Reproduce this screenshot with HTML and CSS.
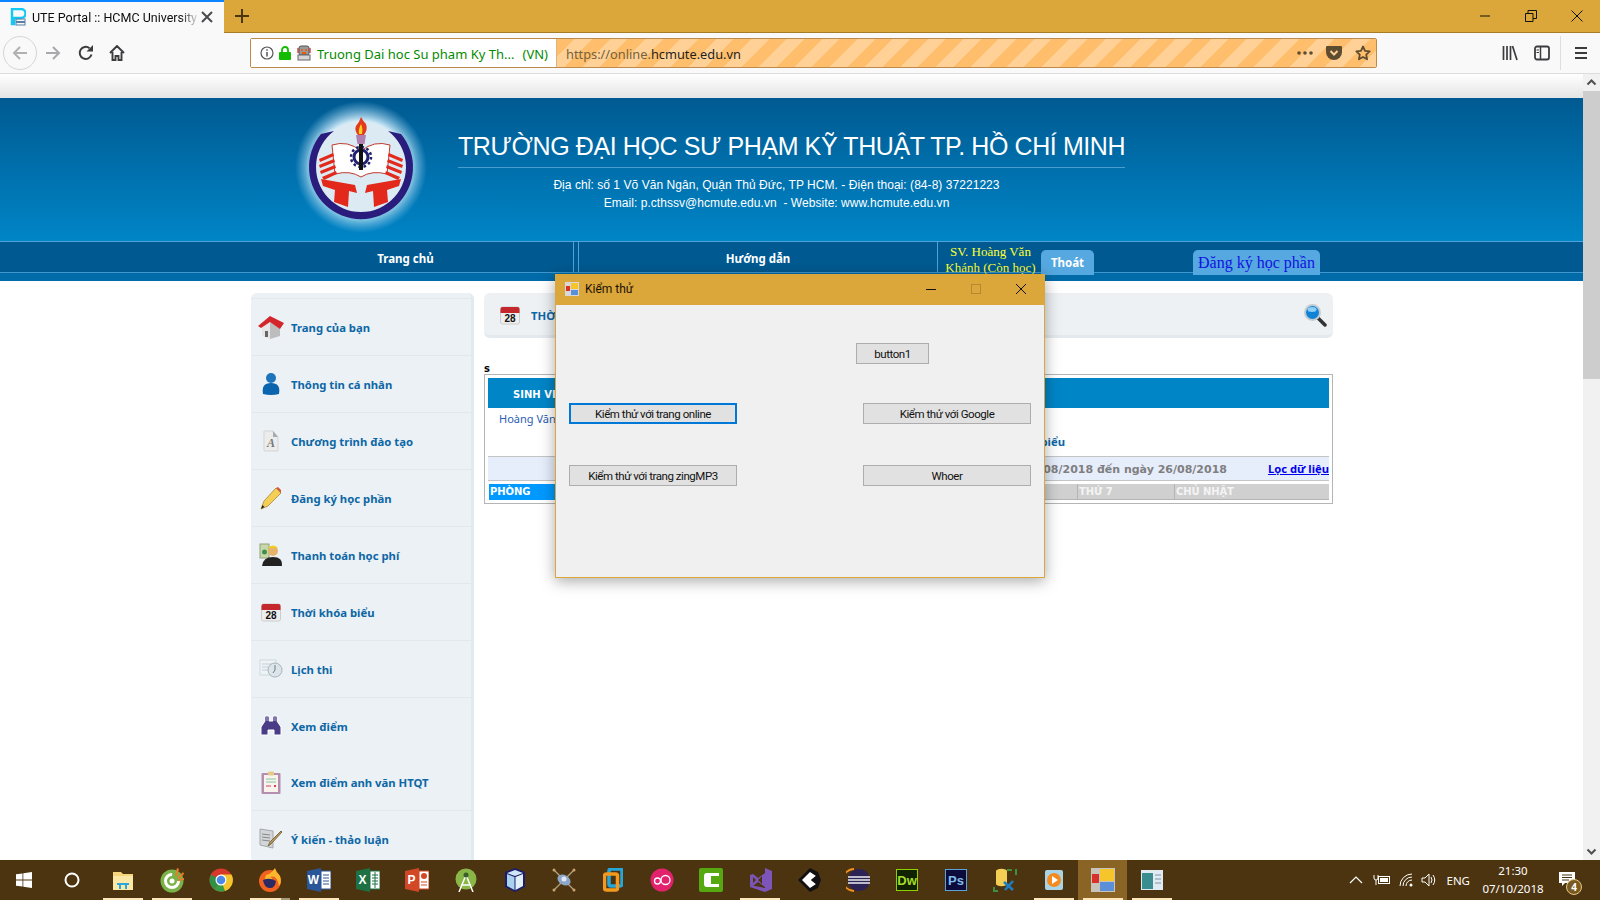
FILE: index.html
```html
<!DOCTYPE html>
<html lang="vi">
<head>
  <meta charset="UTF-8">
  <title>UTE Portal :: HCMC University of Technology</title>
  <link rel="stylesheet" href="styles.css">
</head>
<body>
  <!-- Browser title bar -->
  <div class="titlebar">
    <div class="tab">
      <svg class="favicon" width="16" height="18" viewBox="0 0 16 18"><path d="M2 1h9a4 4 0 0 1 0 9H4v6H2z" fill="none" stroke="#12c8f5" stroke-width="2.400"/><rect x="6" y="11" width="9" height="2.500" fill="none" stroke="#5b7fa5"/><rect x="6" y="14.500" width="9" height="2.500" fill="none" stroke="#5b7fa5"/></svg>
      <span class="tab-title">UTE Portal :: HCMC University of</span>
      <svg class="tab-close" width="12" height="12" viewBox="0 0 12 12"><path d="M1 1l10 10M11 1L1 11" stroke="#4a4a4f" stroke-width="2"/></svg>
    </div>
    <svg class="new-tab" width="16" height="16" viewBox="0 0 16 16"><path d="M8 1v14M1 8h14" stroke="#4b3612" stroke-width="2"/></svg>
    <div class="win-controls">
      <svg width="12" height="12" viewBox="0 0 12 12"><path d="M1 6h10" stroke="#111"/></svg>
      <svg width="12" height="12" viewBox="0 0 12 12"><path d="M.5 3.500h7.500v8h-7.500zM3 3.500V.5h8.500v8H8" fill="none" stroke="#111"/></svg>
      <svg width="12" height="12" viewBox="0 0 12 12"><path d="M.5.5l11 11M11.500.5l-11 11" stroke="#111"/></svg>
    </div>
  </div>

  <!-- Browser toolbar -->
  <div class="toolbar">
    <div class="back-btn">
      <svg width="18" height="18" viewBox="0 0 18 18"><path d="M16 9H3M9 3L3 9l6 6" fill="none" stroke="#b1b1b3" stroke-width="2"/></svg>
    </div>
    <svg class="forward-btn" width="18" height="18" viewBox="0 0 18 18"><path d="M2 9h13M9 3l6 6-6 6" fill="none" stroke="#a9a9ab" stroke-width="2"/></svg>
    <svg class="reload-btn" width="16" height="16" viewBox="0 0 16 16"><path d="M13.500 9.500A6 6 0 1 1 11.500 3.200" fill="none" stroke="#3c3c3f" stroke-width="2"/><path d="M15 0v6.500H8.500z" fill="#3c3c3f"/></svg>
    <svg class="home-btn" width="16" height="16" viewBox="0 0 16 16"><path d="M1 8l7-7 7 7M3.500 7v8h3v-4h3v4h3V7" fill="none" stroke="#3c3c3f" stroke-width="1.900"/></svg>

    <div class="urlbar">
      <div class="identity">
        <svg width="14" height="14" viewBox="0 0 14 14"><circle cx="7" cy="7" r="6" fill="none" stroke="#55555a" stroke-width="1.200"/><path d="M7 6v4.500M7 3.200v1.500" stroke="#55555a" stroke-width="1.500"/></svg>
        <svg width="12" height="14" viewBox="0 0 12 14"><path d="M3 6V4a3 3 0 0 1 6 0v2" fill="none" stroke="#12bc00" stroke-width="1.800"/><rect y="6" width="12" height="8" rx="1" fill="#12bc00"/></svg>
        <svg width="16" height="16" viewBox="0 0 16 16"><rect x="3" y="1" width="10" height="9" rx="2" fill="#9a9a9a" stroke="#555"/><circle cx="6" cy="5" r="1" fill="#e8590c"/><circle cx="10" cy="5" r="1" fill="#e8590c"/><rect x="6" y="7" width="4" height="2" fill="#e8590c"/><path d="M2 3v5M14 3v5" stroke="#c22" stroke-width="1.200"/><rect x="2" y="10" width="12" height="5" fill="#d5d5d5" stroke="#666"/></svg>
        <span class="identity-name">Truong Dai hoc Su pham Ky Th...</span>
        <span class="identity-name">(VN)</span>
      </div>
      <div class="urlfield">
        <span class="url-text">https://online.<b>hcmute.edu.vn</b></span>
        <svg width="16" height="4" viewBox="0 0 16 4"><circle cx="2" cy="2" r="1.800" fill="#5e4c30"/><circle cx="8" cy="2" r="1.800" fill="#5e4c30"/><circle cx="14" cy="2" r="1.800" fill="#5e4c30"/></svg>
        <svg width="16" height="16" viewBox="0 0 16 16"><path d="M1 1h14a1 1 0 0 1 1 1v5a8 8 0 0 1-16 0V2a1 1 0 0 1 1-1z" fill="#5e4c30"/><path d="M4.500 6L8 9.500 11.500 6" fill="none" stroke="#ffd196" stroke-width="2"/></svg>
        <svg width="16" height="16" viewBox="0 0 16 16"><path d="M8 1.500l2 4.300 4.700.6-3.500 3.200.9 4.700L8 12l-4.100 2.300.9-4.700L1.300 6.400 6 5.800z" fill="none" stroke="#5e4c30" stroke-width="1.800" stroke-linejoin="round"/></svg>
      </div>
    </div>

    <div class="tools">
      <svg width="16" height="16" viewBox="0 0 16 16"><path d="M1.500 1v14M5 1v14M8.500 1v14M10.500 1l4.500 14" fill="none" stroke="#3c3c3f" stroke-width="1.700"/></svg>
      <svg width="16" height="16" viewBox="0 0 16 16"><rect x="1" y="1.500" width="14" height="13" rx="2" fill="none" stroke="#3c3c3f" stroke-width="1.800"/><path d="M6.500 2v12" stroke="#3c3c3f" stroke-width="1.500"/><path d="M2.500 5h2.500M2.500 7.500h2.500" stroke="#3c3c3f"/></svg>
      <span class="tools-sep"></span>
      <svg width="14" height="14" viewBox="0 0 14 14"><path d="M1 2h12M1 7h12M1 12h12" stroke="#3c3c3f" stroke-width="1.800"/></svg>
    </div>
  </div>

  <div class="viewport">
    <div class="page">
      <div class="page-top"></div>

      <header class="site-header">
        <svg class="logo" width="128" height="128" viewBox="0 0 128 128">
          <defs>
            <radialGradient id="glow"><stop offset="0.7" stop-color="#cfe9f7"/><stop offset="1" stop-color="#8fcbec" stop-opacity="0"/></radialGradient>
          </defs>
          <circle cx="64" cy="60" r="66" fill="url(#glow)"/>
          <circle cx="64" cy="60" r="46" fill="#dbeaf3"/>
          <path d="M24 27A52 52 0 1 0 104 27L91 24A45 45 0 1 1 37 24Z" fill="#2a1c7c"/>
          <path d="M22 26A54 54 0 1 0 106 26" fill="none" stroke="#6cc0e0"/>
          <path d="M35 38q16-5 29 6 13-11 29-6l-3 29q-15-4-26 3-11-7-26-3z" fill="#fff" stroke="#c23a30"/>
          <circle cx="64" cy="50" r="7" fill="none" stroke="#20206e" stroke-width="3"/>
          <circle cx="64" cy="50" r="10" fill="none" stroke="#20206e" stroke-width="2.500" stroke-dasharray="2.600 2.640"/>
          <rect x="62" y="34" width="4" height="29" fill="#111"/>
          <path d="M60.500 37l-1.500-9h10l-1.500 9z" fill="#b07fb0"/>
          <path d="M64 10q2 4 5 7 2 6-2 11h-6q-4-5-2-9 3-3 5-9z" fill="#e23a1e"/>
          <path d="M64 17q2 4 1 10h-3q-1-4 2-10z" fill="#ffd21e"/>
          <path d="M22 52l14-6 1 3-14 6zM22 58l15-6 1 3-15 6zM23 64l15-6 1 3-15 6zM25 70l14-6 1 3-13 6z" fill="#e3291b"/>
          <path d="M106 52l-14-6-1 3 14 6zM106 58l-15-6-1 3 15 6zM105 64l-15-6-1 3 15 6zM103 70l-14-6-1 3 13 6z" fill="#e3291b"/>
          <path d="M24 72l34 6 2 8-8-2-1 16-14-5 1-12-12-4z" fill="#e3291b"/>
          <path d="M104 72l-34 6-2 8 8-2 1 16 14-5-1-12 12-4z" fill="#e3291b"/>
        </svg>
        <div class="school">
          <h1>TRƯỜNG ĐẠI HỌC SƯ PHẠM KỸ THUẬT TP. HỒ CHÍ MINH</h1>
          <p>Địa chỉ: số 1 Võ Văn Ngân, Quận Thủ Đức, TP HCM. - Điện thoại: (84-8) 37221223</p>
          <p>Email: p.cthssv@hcmute.edu.vn &nbsp;- Website: www.hcmute.edu.vn</p>
        </div>
      </header>

      <nav class="site-nav">
        <div class="nav-row">
          <a class="nav-link nav-home">Trang chủ</a>
          <a class="nav-link nav-guide">Hướng dẫn</a>
          <div class="nav-user">SV. Hoàng Văn<br>Khánh (Còn học)</div>
          <a class="nav-tab nav-logout">Thoát</a>
          <a class="nav-tab nav-register">Đăng ký học phần</a>
        </div>
      </nav>

      <div class="content">
        <aside class="sidebar">
          <a class="side-item">
            <svg width="26" height="24" viewBox="0 0 26 24"><path d="M4 12l8-5v17l-8-3z" fill="#e6e6e6"/><path d="M12 7l10 6v8l-10 3z" fill="#bdbdbd"/><path d="M0 11L12 1l14 7-4 6-10-7-9 6z" fill="#d4262a"/><rect x="7" y="16" width="3" height="6" fill="#666"/></svg>
            <span>Trang của bạn</span>
          </a>
          <a class="side-item">
            <svg width="20" height="24" viewBox="0 0 20 24"><circle cx="10" cy="6" r="5" fill="#1c74bc"/><path d="M2 22q-2-11 8-11t8 11q-8 2-16 0z" fill="#0a64ae"/></svg>
            <span>Thông tin cá nhân</span>
          </a>
          <a class="side-item">
            <svg width="18" height="22" viewBox="0 0 18 22"><path d="M2 1h9l5 6v14H2z" fill="#ececec" stroke="#d5d5d5"/><path d="M11 1v6h5z" fill="#aaa"/><text x="5" y="17" class="glyph-a">A</text></svg>
            <span>Chương trình đào tạo</span>
          </a>
          <a class="side-item">
            <svg width="22" height="24" viewBox="0 0 22 24"><path d="M1 23l3-8L16 2l5 5L8 20z" fill="#f5cf55" stroke="#b59a50"/><path d="M16 2l2-1 3 3v3z" fill="#d4573a"/><path d="M1 23l1.500-4 2 2z" fill="#222"/></svg>
            <span>Đăng ký học phần</span>
          </a>
          <a class="side-item">
            <svg width="24" height="24" viewBox="0 0 24 24"><rect x="1" y="1" width="9" height="14" fill="#c9d8a8" stroke="#96a07a"/><circle cx="5.500" cy="9" r="2.500" fill="#3f8f4f"/><circle cx="14" cy="8" r="5" fill="#e6b36a"/><path d="M9 5q5-5 10 0z" fill="#f2cc1f"/><path d="M3 23q1-9 11-9t9 9z" fill="#222"/></svg>
            <span>Thanh toán học phí</span>
          </a>
          <a class="side-item">
            <svg class="cal" width="20" height="20" viewBox="0 0 20 20"><rect x="0.500" y="2" width="19" height="17" rx="2" fill="#eee" stroke="#ccc"/><path d="M.5 8V4a2 2 0 0 1 2-2h15a2 2 0 0 1 2 2v4z" fill="#c5282c"/><text x="10" y="17" class="glyph-cal">28</text></svg>
            <span>Thời khóa biểu</span>
          </a>
          <a class="side-item">
            <svg width="24" height="20" viewBox="0 0 24 20"><rect x="1" y="1" width="16" height="15" fill="#eef3f6" stroke="#cfd9e0"/><path d="M3 5h10M3 8h8M3 11h8" stroke="#c5ced5"/><circle cx="16" cy="11" r="7" fill="#dce5ea" stroke="#a8b4bc"/><path d="M16 6v5l-2 3" fill="none" stroke="#6d7a85"/></svg>
            <span>Lịch thi</span>
          </a>
          <a class="side-item">
            <svg width="24" height="22" viewBox="0 0 24 22"><path d="M6 1h4v5h4V1h4v5l4 6v8h-7v-5h-6v5H2v-8l4-6z" fill="#4b3d85" stroke="#fff"/><path d="M6 2h4v4H6zM14 2h4v4h-4z" fill="#8376b0"/></svg>
            <span>Xem điểm</span>
          </a>
          <a class="side-item side-item-short">
            <svg width="20" height="24" viewBox="0 0 20 24"><rect x="0.500" y="2" width="19" height="21" rx="1" fill="#b68fb0"/><rect x="3" y="4" width="14" height="17" fill="#f9f3ee"/><rect x="7" y="0.500" width="6" height="4" rx="1" fill="#e4c98a"/><path d="M5 8h10M5 11h10" stroke="#84c8a0"/><path d="M5 15h5" stroke="#d9415e"/><rect x="13" y="14" width="2" height="2" fill="#d9415e"/></svg>
            <span>Xem điểm anh văn HTQT</span>
          </a>
          <a class="side-item">
            <svg width="24" height="24" viewBox="0 0 24 24"><path d="M1 2l13 2v17L1 18z" fill="#d3d6d8" stroke="#a5a8aa"/><path d="M3 7l8 1M3 10l8 1M3 13l8 1" stroke="#888"/><path d="M9 19l2-4L22 4l1 1-11 12z" fill="#b79a5c" stroke="#7d6b3f"/></svg>
            <span>Ý kiến - thảo luận</span>
          </a>
        </aside>

        <main class="main">
          <div class="main-head">
            <svg class="cal" width="20" height="20" viewBox="0 0 20 20"><rect x="0.500" y="2" width="19" height="17" rx="2" fill="#eee" stroke="#ccc"/><path d="M.5 8V4a2 2 0 0 1 2-2h15a2 2 0 0 1 2 2v4z" fill="#c5282c"/><text x="10" y="17" class="glyph-cal">28</text></svg>
            <span class="main-title">THỜI KHÓA BIỂU</span>
            <svg class="search" width="24" height="24" viewBox="0 0 24 24"><path d="M14 14l8 8" stroke="#333" stroke-width="3.500" stroke-linecap="round"/><circle cx="9.500" cy="9.500" r="7.500" fill="#1083d6" stroke="#c4ccd2" stroke-width="2"/><ellipse cx="9" cy="6.500" rx="4.500" ry="2.500" fill="#8fd0f5"/></svg>
          </div>
          <div class="small-s">s</div>
          <div class="tkb">
            <div class="tkb-band">SINH VIÊN</div>
            <div class="tkb-name">Hoàng Văn Khánh</div>
            <div class="tkb-heading">Thời khóa biểu</div>
            <div class="tkb-filter">
              <span class="tkb-range">Từ ngày 20/08/2018 đến ngày 26/08/2018</span>
              <a class="tkb-link">Lọc dữ liệu</a>
            </div>
            <div class="tkb-cols">
              <div class="col col-room">PHÒNG</div>
              <div class="col">THỨ 2</div>
              <div class="col">THỨ 3</div>
              <div class="col">THỨ 4</div>
              <div class="col">THỨ 5</div>
              <div class="col">THỨ 6</div>
              <div class="col">THỨ 7</div>
              <div class="col">CHỦ NHẬT</div>
            </div>
          </div>
        </main>
      </div>
    </div>

    <div class="scrollbar">
      <svg width="17" height="17" viewBox="0 0 17 17"><path d="M4.500 10.500l4-4 4 4" fill="none" stroke="#505050" stroke-width="2"/></svg>
      <div class="scroll-track"><div class="scroll-thumb"></div></div>
      <svg width="17" height="17" viewBox="0 0 17 17"><path d="M4.500 6.500l4 4 4-4" fill="none" stroke="#505050" stroke-width="2"/></svg>
    </div>

    <!-- WinForms window on top of the page -->
    <div class="dialog">
      <div class="dialog-title">
        <svg width="14" height="14" viewBox="0 0 14 14"><rect width="14" height="14" fill="#d8d8d8"/><rect x="1" y="4" width="4" height="5" fill="#d8302a"/><rect x="6" y="1" width="7" height="6" fill="#f6c52c"/><rect x="6" y="8" width="7" height="5" fill="#5b8fd8"/></svg>
        <span class="dialog-name">Kiểm thử</span>
        <svg class="dlg-ctl" width="10" height="10" viewBox="0 0 10 10"><path d="M0 5.500h10" stroke="#111"/></svg>
        <svg class="dlg-ctl" width="10" height="10" viewBox="0 0 10 10"><rect x=".5" y=".5" width="9" height="9" fill="none" stroke="#b38a33"/></svg>
        <svg class="dlg-ctl" width="10" height="10" viewBox="0 0 10 10"><path d="M0 0l10 10M10 0L0 10" stroke="#111"/></svg>
      </div>
      <div class="dialog-body">
        <div class="dlg-row dlg-row-first"><button class="win-btn btn-small">button1</button></div>
        <div class="dlg-row"><button class="win-btn focused">Kiểm thử với trang online</button><button class="win-btn">Kiểm thử với Google</button></div>
        <div class="dlg-row"><button class="win-btn">Kiểm thử với trang zingMP3</button><button class="win-btn">Whoer</button></div>
      </div>
    </div>
  </div>

  <!-- Windows taskbar -->
  <footer class="taskbar">
    <div class="task task-sys">
      <svg width="16" height="16" viewBox="0 0 16 16"><path d="M0 2.300l6.500-.9v6.200H0zM7.300 1.300L16 0v7.600H7.300zM0 8.400h6.500v6.200L0 13.700zM7.300 8.400H16V16l-8.700-1.300z" fill="#fff"/></svg>
    </div>
    <div class="task task-sys task-cortana">
      <svg width="16" height="16" viewBox="0 0 16 16"><circle cx="8" cy="8" r="6.500" fill="none" stroke="#fff" stroke-width="2"/></svg>
    </div>
    <div class="task run">
      <svg width="24" height="24" viewBox="0 0 24 24"><path d="M2 4h8l2 2h10v16H2z" fill="#f5d67c"/><path d="M2 8h20v14H2z" fill="#fbe7a6"/><path d="M8 21v-6h8v6h-2v-4h-4v4z" fill="#2aa7e0"/><path d="M6 15h12v2H6z" fill="#2aa7e0"/></svg>
    </div>
    <div class="task run">
      <svg width="24" height="26" viewBox="0 0 24 26"><circle cx="12" cy="14" r="11.500" fill="#79b248"/><circle cx="12" cy="14" r="6.500" fill="none" stroke="#fff" stroke-width="3" stroke-dasharray="30 11"/><circle cx="12" cy="14" r="2.500" fill="#fff"/><path d="M15 9l2-8 2 1-2 7zM17 11l6-6 1 2-5 5zM18 13l6-2v2l-6 1z" fill="#ee7a2a"/></svg>
    </div>
    <div class="task">
      <svg width="24" height="24" viewBox="0 0 24 24"><circle cx="12" cy="12" r="11.500" fill="#d8382c"/><path d="M12 12L22 18A11.500 11.500 0 0 1 5 21.200z" fill="#3a9b45"/><path d="M12 12L2 6.700A11.500 11.500 0 0 0 5 21.200z" fill="#2f9143"/><path d="M12 6.500h10.500A11.500 11.500 0 0 1 16 23L12 12z" fill="#f5c32c"/><circle cx="12" cy="12" r="5.500" fill="#fff"/><circle cx="12" cy="12" r="4.300" fill="#4a8ae6"/></svg>
    </div>
    <div class="task run run-double">
      <svg width="24" height="26" viewBox="0 0 24 26"><circle cx="12" cy="14" r="11" fill="#f2621f"/><path d="M17 1q1 4 5 8 2 6-1 10-2-12-9-9 3 1 3 4-5-1-8 3-1-5 1-9 5-1 9-7z" fill="#fcb72c"/><path d="M5 13q7-3 13 1-1 8-7 7-5-1-6-8z" fill="#2c2a64"/></svg>
    </div>
    <div class="task run">
      <svg width="24" height="24" viewBox="0 0 24 24"><path d="M0 3l14-3v24L0 21z" fill="#2a5699"/><rect x="14" y="3" width="10" height="18" fill="#fff" stroke="#2a5699"/><path d="M16 7h6M16 10h6M16 13h6M16 16h6" stroke="#2a5699"/><text x="6.500" y="16" class="glyph-office">W</text></svg>
    </div>
    <div class="task">
      <svg width="24" height="24" viewBox="0 0 24 24"><path d="M0 3l14-3v24L0 21z" fill="#1e7145"/><rect x="14" y="3" width="10" height="18" fill="#fff" stroke="#1e7145"/><path d="M16 7h6M16 10h6M16 13h6M16 16h6M19 4v16" stroke="#1e7145"/><text x="6.500" y="16" class="glyph-office">X</text></svg>
    </div>
    <div class="task">
      <svg width="24" height="24" viewBox="0 0 24 24"><path d="M0 3l14-3v24L0 21z" fill="#d24726"/><rect x="14" y="3" width="10" height="18" fill="#fff" stroke="#d24726"/><path d="M16 14h6M16 17h6" stroke="#d24726"/><circle cx="19" cy="8" r="3" fill="#d24726"/><text x="6.500" y="16" class="glyph-office">P</text></svg>
    </div>
    <div class="task">
      <svg width="22" height="24" viewBox="0 0 22 24"><circle cx="11" cy="11" r="10.500" fill="#8ab648"/><path d="M11 7L4 24M11 7l7 17M6 17h10" fill="none" stroke="#fff" stroke-width="1.500"/><circle cx="11" cy="7" r="2.500" fill="#3a5f2a"/></svg>
    </div>
    <div class="task">
      <svg width="24" height="26" viewBox="0 0 24 26"><path d="M12 1l10 4v15l-10 5-10-5V5z" fill="#1c1c6c"/><path d="M12 3l8 3-8 3-8-3z" fill="#cfe6f5"/><path d="M4 7l7.500 3v13L4 19z" fill="#a8d2ef"/><path d="M20 7l-7.500 3v13l7.500-4z" fill="#e2eff8"/></svg>
    </div>
    <div class="task">
      <svg width="24" height="24" viewBox="0 0 24 24"><path d="M2 2l20 20M22 2L2 22" stroke="#b0a27f" stroke-width="1.300"/><ellipse cx="12" cy="12" rx="7" ry="5" transform="rotate(30 12 12)" fill="#8ea6c8"/><circle cx="12" cy="11" r="2.500" fill="#dfe8f4"/><circle cx="2" cy="2" r="1.500" fill="#caa468"/><circle cx="22" cy="2" r="1.500" fill="#caa468"/><circle cx="2" cy="22" r="1.500" fill="#caa468"/><circle cx="22" cy="22" r="1.500" fill="#caa468"/></svg>
    </div>
    <div class="task">
      <svg width="20" height="24" viewBox="0 0 20 24"><rect x="6" y="1" width="13" height="17" rx="2" fill="none" stroke="#27a7d8" stroke-width="3.500"/><rect x="1.500" y="6" width="13" height="16" rx="2" fill="none" stroke="#f29a1f" stroke-width="3.500"/></svg>
    </div>
    <div class="task">
      <svg width="24" height="24" viewBox="0 0 24 24"><circle cx="12" cy="12" r="11.500" fill="#e2226d"/><circle cx="7.500" cy="13" r="3" fill="none" stroke="#fff" stroke-width="1.300"/><circle cx="15.500" cy="12" r="4.500" fill="none" stroke="#fff" stroke-width="1.300"/></svg>
    </div>
    <div class="task">
      <svg width="24" height="24" viewBox="0 0 24 24"><rect width="24" height="24" rx="2" fill="#55a810"/><path d="M20 5H8q-3 0-3 3v8q0 3 3 3h12v-3h-8V8h8z" fill="#fff"/></svg>
    </div>
    <div class="task run">
      <svg width="24" height="26" viewBox="0 0 24 26"><path d="M17 1l7 3v18l-7 3L2 20v-2l15 3z" fill="#7d55b8"/><path d="M17 6v14l-7-5-5 4-3-1V8l3-1 5 4z" fill="#7d55b8"/><path d="M5 10v6l3-3zM14 9l-4 4 4 4z" fill="#4d3410"/></svg>
    </div>
    <div class="task">
      <svg width="24" height="26" viewBox="0 0 24 26"><path d="M13 1l8 4 3 8-3 8-8 4L1 13z" fill="#111"/><path d="M13 5l6 4-5 4 5 4-6 4-8-8z" fill="#fff"/><path d="M14 13l5-4 1 4-1 4z" fill="#111"/></svg>
    </div>
    <div class="task">
      <svg width="24" height="24" viewBox="0 0 24 24"><path d="M8 1a11 11 0 0 0 0 22" fill="none" stroke="#f7941e" stroke-width="1.800"/><circle cx="13" cy="12" r="11" fill="#2c2255"/><path d="M2 9h22M2 12h22M2 15h22" stroke="#eee" stroke-width="1.500"/></svg>
    </div>
    <div class="task">
      <svg width="22" height="22" viewBox="0 0 22 22"><rect x=".5" y=".5" width="21" height="21" fill="#112203" stroke="#91d100"/><text x="11" y="16" class="glyph-adobe glyph-dw">Dw</text></svg>
    </div>
    <div class="task">
      <svg width="22" height="22" viewBox="0 0 22 22"><rect x=".5" y=".5" width="21" height="21" fill="#0c0c3c" stroke="#5ea1d8"/><text x="11" y="16" class="glyph-adobe glyph-ps">Ps</text></svg>
    </div>
    <div class="task">
      <svg width="24" height="24" viewBox="0 0 24 24"><path d="M3 3a5 2 0 0 1 11 0v13a5 2 0 0 1-11 0z" fill="#f5cf55"/><path d="M14 2h5M23 1v6M1 19v4h4" fill="none" stroke="#3e8f3e" stroke-width="2"/><path d="M11 14l9 8M20 13l-8 9" stroke="#1c7fc4" stroke-width="2.500"/></svg>
    </div>
    <div class="task run">
      <svg width="20" height="22" viewBox="0 0 20 22"><rect x="1" y="1" width="18" height="20" rx="2" fill="#a9d4e6"/><circle cx="10" cy="11" r="7" fill="#f58b1f"/><path d="M8 7l6 4-6 4z" fill="#fff"/></svg>
    </div>
    <div class="task run task-active">
      <svg width="24" height="24" viewBox="0 0 24 24"><rect width="24" height="24" fill="#c9c4ba"/><rect x="1" y="6" width="7" height="9" fill="#d8302a"/><rect x="9" y="1" width="14" height="12" fill="#f6c52c"/><rect x="9" y="14" width="14" height="9" fill="#5b8fd8"/></svg>
    </div>
    <div class="task run">
      <svg width="22" height="20" viewBox="0 0 22 20"><rect width="22" height="20" fill="#dfeaf2"/><rect x="1" y="3" width="11" height="16" fill="#3a8d8f"/><path d="M14 5h6M14 9h6M14 13h6" stroke="#9fb0bd" stroke-width="1.500"/></svg>
    </div>

    <div class="tray">
      <svg width="14" height="8" viewBox="0 0 14 8"><path d="M1 7l6-6 6 6" fill="none" stroke="#fff" stroke-width="1.200"/></svg>
      <svg class="tray-power" width="18" height="12" viewBox="0 0 18 12"><rect x="5.500" y="2.500" width="11" height="7" fill="none" stroke="#fff"/><rect x="7" y="4" width="8" height="4" fill="#fff"/><path d="M1 1v3a2 2 0 0 0 4 0V1M3 6v5" fill="none" stroke="#fff"/></svg>
      <svg class="tray-wifi" width="16" height="14" viewBox="0 0 16 14"><path d="M1 13A12 12 0 0 1 13 1M4 13a9 9 0 0 1 9-9M7 13a6 6 0 0 1 6-6" fill="none" stroke="#fff"/><circle cx="12" cy="12" r="1.500" fill="#fff"/></svg>
      <svg class="tray-sound" width="16" height="14" viewBox="0 0 16 14"><path d="M1 5h3l4-4v12L4 9H1z" fill="none" stroke="#fff"/><path d="M10 4q2 3 0 6M12 2q3.500 5 0 10" fill="none" stroke="#fff"/></svg>
      <span class="tray-lang">ENG</span>
      <div class="tray-clock">21:30<br>07/10/2018</div>
      <div class="notify">
        <svg width="16" height="16" viewBox="0 0 16 16"><path d="M0 1h16v11H6l-3 3v-3H0z" fill="#fff"/><path d="M3 4h10M3 6.500h10M3 9h7" stroke="#4d3410"/></svg>
        <span class="notify-badge">4</span>
      </div>
    </div>
  </footer>
</body>
</html>
```

FILE: styles.css
```css
/* Global */
* {
  box-sizing: border-box;
}

html, body {
  margin: 0;
  padding: 0;
  height: 900px;
  overflow: hidden;
}

body {
  display: flex;
  flex-direction: column;
  font-family: "Noto Sans", sans-serif;
  background-color: #fff;
}

h1, p {
  margin: 0;
}

svg {
  display: block;
  flex: none;
}

/* Browser title bar */
.titlebar {
  display: flex;
  align-items: center;
  height: 33px;
  background-color: #dba63a;
  border-bottom: 1px solid #a67c28;
}

.tab {
  display: flex;
  align-items: center;
  width: 224px;
  height: 33px;
  padding: 0 10px;
  background-color: #f9f9fa;
  border-top: 2px solid #0a84ff;
}

.tab-title {
  width: 168px;
  margin-left: 6px;
  font-family: "Roboto", sans-serif;
  font-size: 12.500px;
  color: #0c0c0d;
  white-space: nowrap;
  -webkit-mask-image: linear-gradient(90deg, #000 88%, transparent);
  mask-image: linear-gradient(90deg, #000 88%, transparent);
}

.tab-close {
  margin-left: 1px;
}

.new-tab {
  margin-left: 10px;
}

.win-controls {
  display: flex;
  gap: 34px;
  margin-left: auto;
  padding-right: 17px;
}

/* Browser toolbar */
.toolbar {
  display: flex;
  align-items: center;
  height: 41px;
  padding-left: 3px;
  background-color: #f9f9fa;
  border-bottom: 1px solid #dcdcdc;
}

.back-btn {
  display: flex;
  align-items: center;
  justify-content: center;
  width: 34px;
  height: 34px;
  border: 1px solid #d5d5d6;
  border-radius: 50%;
}

.forward-btn {
  margin-left: 7px;
}

.reload-btn {
  margin-left: 16px;
}

.home-btn {
  margin-left: 15px;
}

.urlbar {
  display: flex;
  width: 1127px;
  height: 30px;
  margin-left: 125px;
  border: 1px solid #bd8a4b;
  border-radius: 2px;
}

.identity {
  display: flex;
  align-items: center;
  gap: 5px;
  width: 306px;
  padding-left: 9px;
  background-color: #fff;
  border-right: 1px solid #d9b783;
}

.identity-name {
  padding-top: 2px;
  font-size: 13px;
  color: #058b00;
  white-space: nowrap;
}

.identity-name + .identity-name {
  margin-left: 3px;
}

.urlfield {
  display: flex;
  flex: 1;
  align-items: center;
  gap: 13px;
  padding: 0 5px 0 9px;
  background: repeating-linear-gradient(135deg, #ffbe6b 0 12.500px, #ffd196 12.500px 25px);
}

.url-text {
  margin-right: auto;
  padding-top: 2px;
  font-size: 12.800px;
  color: #75623f;
}

.url-text b {
  font-weight: 400;
  color: #1f1f1f;
}

.tools {
  display: flex;
  align-items: center;
  gap: 16px;
  margin-left: 125px;
}

.tools-sep {
  width: 1px;
  height: 34px;
  margin: 0 -3px 0 -6px;
  background-color: #dedede;
}

/* Main viewport */
.viewport {
  position: relative;
  display: flex;
  height: 786px;
  overflow: hidden;
}

.page {
  flex: 1;
  overflow: hidden;
}

.page-top {
  height: 24px;
  background: linear-gradient(#fff, #e4e4e4);
}

.site-header {
  display: flex;
  height: 143px;
  padding-left: 297px;
  background: linear-gradient(#005a91, #0085c7);
}

.logo {
  margin-top: 9px;
  overflow: visible;
}

.school {
  width: 667px;
  margin-left: 33px;
  text-align: center;
  color: #fff;
}

.school h1 {
  height: 41px;
  margin: 29px 0 8px;
  padding-top: 4px;
  border-bottom: 1px solid #4a9bd0;
  font-family: "Liberation Sans", sans-serif;
  font-size: 25px;
  font-weight: 400;
  letter-spacing: -0.4px;
  line-height: 30px;
  white-space: nowrap;
}

.school p {
  padding-right: 30px;
  font-family: "Liberation Sans", sans-serif;
  font-size: 12px;
  letter-spacing: 0.05px;
  line-height: 18px;
  white-space: nowrap;
}

/* Site nav */
.site-nav {
  height: 40px;
  padding-bottom: 8px;
  background-color: #006ba8;
  border-top: 1px solid #4ea3dc;
}

.nav-row {
  display: flex;
  height: 31px;
  background-color: #005a91;
  border-bottom: 1px solid #3e97cf;
}

.nav-link {
  display: flex;
  align-items: center;
  justify-content: center;
  padding-top: 3px;
  font-size: 11.500px;
  font-weight: 700;
  color: #fff;
}

.nav-home {
  width: 574px;
  padding-left: 238px;
  border-right: 1px solid #4ea3dc;
}

.nav-guide {
  width: 360px;
  margin-left: 4px;
  border-left: 1px solid #4ea3dc;
  border-right: 1px solid #4ea3dc;
}

.nav-user {
  width: 103px;
  padding: 2px 0 0 2px;
  font-family: "Liberation Serif", serif;
  font-size: 13px;
  line-height: 15.500px;
  text-align: center;
  color: #ffff33;
  white-space: nowrap;
}

.nav-tab {
  display: flex;
  align-items: center;
  justify-content: center;
  height: 25px;
  margin-top: 8px;
  background-color: #55a8e0;
  border-radius: 5px 5px 0 0;
}

.nav-logout {
  width: 53px;
  font-size: 11.500px;
  font-weight: 700;
  color: #fff;
}

.nav-register {
  width: 127px;
  margin-left: 99px;
  font-family: "Liberation Serif", serif;
  font-size: 16px;
  color: #1212e0;
  white-space: nowrap;
}

/* Page content */
.content {
  display: flex;
  align-items: flex-start;
  gap: 10px;
  padding: 12px 0 0 251px;
}

.sidebar {
  width: 223px;
  padding-top: 5px;
  background-color: #ebf1f5;
  border-right: 3px solid #e1eaef;
  border-radius: 6px 6px 0 0;
}

.side-item {
  position: relative;
  display: flex;
  align-items: center;
  height: 57px;
  padding-left: 40px;
  font-size: 11.300px;
  font-weight: 700;
  color: #0d67a5;
  border-top: 1px solid #e1e9ee;
}

.side-item-short {
  height: 56px;
  border-top-color: transparent;
}

.side-item svg {
  position: absolute;
  left: 20px;
  top: 50%;
  transform: translate(-50%, -50%);
}

.glyph-a {
  font-family: "Liberation Serif", serif;
  font-size: 12px;
  font-style: italic;
  fill: #777;
}

.glyph-cal {
  font-family: "Liberation Sans", sans-serif;
  font-size: 10px;
  font-weight: 700;
  text-anchor: middle;
  fill: #111;
}

.main {
  width: 849px;
}

.main-head {
  display: flex;
  align-items: center;
  height: 45px;
  padding: 2px 6px 0 16px;
  background-color: #edf1f4;
  border-bottom: 3px solid #e3e9ed;
  border-radius: 6px;
}

.main-title {
  margin-left: 11px;
  font-size: 11.300px;
  font-weight: 700;
  color: #0d67a5;
}

.search {
  margin-left: auto;
}

.small-s {
  height: 36px;
  padding-top: 24px;
  font-family: "DejaVu Sans", sans-serif;
  font-size: 10px;
  font-weight: 700;
  line-height: 14px;
  color: #000;
}

.tkb {
  height: 130px;
  padding: 3px;
  background-color: #fff;
  border: 1px solid #b5b5b5;
}

.tkb-band {
  height: 30px;
  padding: 2px 0 0 25px;
  background-color: #0085c7;
  font-family: "DejaVu Sans", sans-serif;
  font-size: 10px;
  font-weight: 700;
  line-height: 30px;
  color: #fff;
}

.tkb-name {
  height: 22px;
  padding-left: 11px;
  font-size: 11px;
  line-height: 22px;
  color: #2a5db0;
}

.tkb-heading {
  height: 26px;
  padding: 4px 264px 0 0;
  font-size: 11.300px;
  font-weight: 700;
  line-height: 16px;
  text-align: right;
  color: #0d67a5;
}

.tkb-filter {
  display: flex;
  align-items: center;
  justify-content: flex-end;
  gap: 41px;
  height: 25px;
  background-color: #e6edfb;
  border-top: 1px solid #c4c4c4;
  border-bottom: 1px solid #c4c4c4;
}

.tkb-range {
  padding-top: 1px;
  font-family: "DejaVu Sans", sans-serif;
  font-size: 11px;
  font-weight: 700;
  color: #7f7f7f;
}

.tkb-link {
  font-size: 11.200px;
  font-weight: 700;
  color: #0000ee;
  text-decoration: underline;
}

.tkb-cols {
  display: grid;
  grid-template-columns: 98px repeat(5, 98px) 97px 157px;
  height: 16px;
  margin: 3px 0 0 1px;
  background-color: #d0d0d0;
  border-bottom: 1px solid #b5b5b5;
}

.col {
  padding-left: 1px;
  font-family: "DejaVu Sans", sans-serif;
  font-size: 10px;
  font-weight: 700;
  letter-spacing: -0.1px;
  line-height: 16px;
  color: #f4f4f4;
  border-left: 1px solid #b5b5b5;
  white-space: nowrap;
}

.col-room {
  background-color: #0099ff;
  border-left: 0;
  color: #fff;
}

/* Scrollbar */
.scrollbar {
  display: flex;
  flex-direction: column;
  width: 17px;
  background-color: #f1f1f1;
}

.scroll-track {
  flex: 1;
}

.scroll-thumb {
  width: 100%;
  height: 288px;
  background-color: #cdcdcd;
}

/* Dialog window */
.dialog {
  position: absolute;
  left: 555px;
  top: 200px;
  display: flex;
  flex-direction: column;
  width: 490px;
  height: 304px;
  border: 1px solid #dba63a;
  background-color: #f0f0f0;
  box-shadow: 0 3px 14px rgba(0, 0, 0, 0.35);
}

.dialog-title {
  display: flex;
  align-items: center;
  height: 30px;
  padding: 0 0 2px 9px;
  background-color: #dba63a;
}

.dialog-name {
  margin-left: 6px;
  margin-right: auto;
  font-family: "Roboto", sans-serif;
  font-size: 12px;
  color: #1a1206;
}

.dlg-ctl {
  margin-right: 35px;
}

.dlg-ctl:last-child {
  margin-right: 18px;
}

.dialog-body {
  display: flex;
  flex-direction: column;
  padding: 0 13px;
}

.dlg-row {
  display: flex;
  justify-content: space-between;
  margin-top: 41px;
}

.dlg-row:nth-child(2) {
  margin-top: 39px;
}

.dlg-row-first {
  margin-top: 38px;
  padding-left: 287px;
}

.win-btn {
  width: 168px;
  height: 21px;
  padding: 0;
  font-family: "Roboto", sans-serif;
  font-size: 11.500px;
  letter-spacing: -0.45px;
  color: #111;
  background-color: #e1e1e1;
  border: 1px solid #adadad;
}

.win-btn.focused {
  border: 2px solid #0078d7;
}

.btn-small {
  width: 73px;
}

/* Taskbar */
.taskbar {
  display: flex;
  align-items: center;
  height: 40px;
  background-color: #4d3410;
}

.task {
  position: relative;
  display: flex;
  align-items: center;
  justify-content: center;
  width: 49px;
  height: 40px;
}

.task-sys {
  width: 48px;
}

.task-cortana {
  margin-right: 2px;
}

.task.run::after {
  content: "";
  position: absolute;
  left: 5px;
  right: 4px;
  bottom: 0;
  height: 2px;
  background-color: #ffe7bb;
}

.task.run-double::after {
  background: linear-gradient(90deg, #ffe7bb 78%, #a89a7f 78%);
}

.task-active {
  background-color: #8a6424;
}

.tray {
  display: flex;
  align-items: center;
  margin-left: auto;
  color: #fff;
}

.tray-power {
  margin-left: 10px;
}

.tray-wifi {
  margin-left: 8px;
}

.tray-sound {
  margin-left: 6px;
}

.tray-lang {
  margin-left: 9px;
  font-size: 11.500px;
}

.tray-clock {
  width: 72px;
  margin-left: 7px;
  font-size: 11.500px;
  line-height: 18px;
  text-align: center;
}

.notify {
  position: relative;
  margin: 0 25px 2px 10px;
}

.notify-badge {
  position: absolute;
  left: 7px;
  top: 8px;
  width: 16px;
  height: 16px;
  border-radius: 50%;
  background-color: #7a5a20;
  border: 1px solid #e6c98c;
  font-size: 10px;
  font-weight: 700;
  line-height: 14px;
  text-align: center;
}

/* Text inside icons */
.glyph-office {
  font-family: "Liberation Sans", sans-serif;
  font-size: 12px;
  font-weight: 700;
  text-anchor: middle;
  fill: #fff;
}

.glyph-adobe {
  font-family: "Liberation Sans", sans-serif;
  font-size: 13px;
  font-weight: 700;
  text-anchor: middle;
}

.glyph-dw {
  fill: #a4dc2a;
}

.glyph-ps {
  fill: #7fbcec;
}
```
